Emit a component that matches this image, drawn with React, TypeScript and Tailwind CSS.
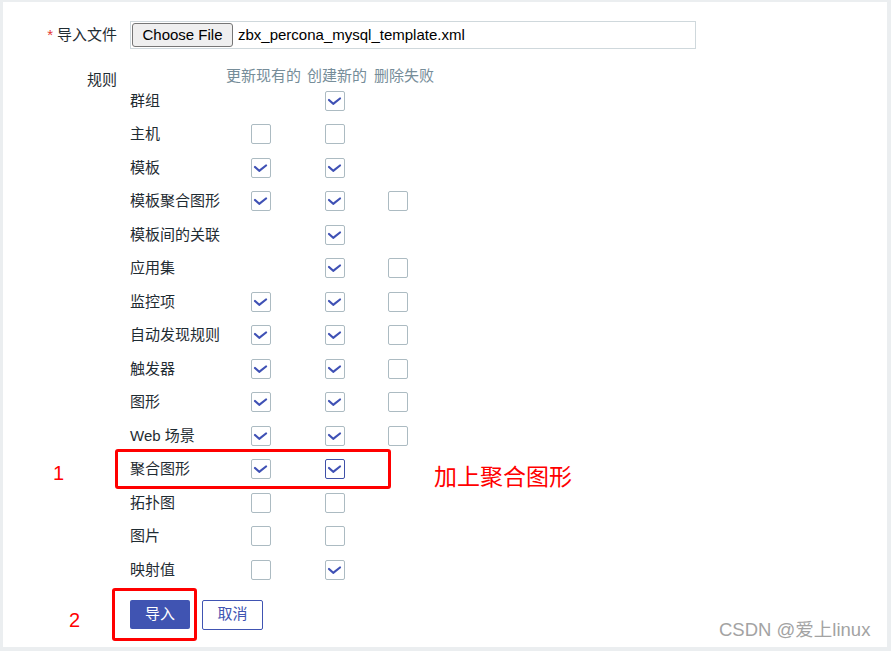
import React from 'react';

type Row = { name: string; update?: boolean | null; create?: boolean | null; del?: boolean | null; focus?: boolean };

// null = no checkbox in that column
const rows: Row[] = [
  { name: '群组', update: null, create: true, del: null },
  { name: '主机', update: false, create: false, del: null },
  { name: '模板', update: true, create: true, del: null },
  { name: '模板聚合图形', update: true, create: true, del: false },
  { name: '模板间的关联', update: null, create: true, del: null },
  { name: '应用集', update: null, create: true, del: false },
  { name: '监控项', update: true, create: true, del: false },
  { name: '自动发现规则', update: true, create: true, del: false },
  { name: '触发器', update: true, create: true, del: false },
  { name: '图形', update: true, create: true, del: false },
  { name: 'Web 场景', update: true, create: true, del: false },
  { name: '聚合图形', update: true, create: true, del: null, focus: true },
  { name: '拓扑图', update: false, create: false, del: null },
  { name: '图片', update: false, create: false, del: null },
  { name: '映射值', update: false, create: true, del: null },
];

function Checkbox({ checked, focus }: { checked: boolean; focus?: boolean }) {
  return (
    <div
      className={`w-5 h-5 rounded-[2px] border bg-white ${
        focus ? 'border-[#3f51a8]' : 'border-[#acbbc2]'
      }`}
    >
      {checked && (
        <svg width="18" height="18" viewBox="0 0 18 18" fill="none">
          <path d="M3 8 L7.2 11.8 L14 6.5" stroke="#3f51b5" strokeWidth="2.2" strokeLinecap="round" strokeLinejoin="round" />
        </svg>
      )}
    </div>
  );
}

export default function App() {
  const font = { fontFamily: '"Liberation Sans", Arial, "Noto Sans CJK SC", sans-serif' };

  return (
    <div className="relative w-[891px] h-[651px] bg-[#ebeef0] pt-[2px] pl-[3px] pr-[4px] pb-[4px] overflow-hidden" style={font}>
      <div className="w-full h-full bg-white pt-[19px] text-[15px] text-[#1f2c33]">
        {/* Import file */}
        <div className="flex items-center h-[28px]">
          <div className="w-[114px] text-right">
            <span className="text-[#e33734] mr-[4px]">*</span>导入文件
          </div>
          <div className="ml-[13px] w-[566px] h-[28px] border border-[#cfd8dc] flex items-center pl-[1px]">
            <button className="h-[24px] w-[101px] bg-[#efefef] border border-[#767676] rounded-[3px] text-[15px] text-black">
              Choose File
            </button>
            <span className="ml-[5px] text-black">zbx_percona_mysql_template.xml</span>
          </div>
        </div>

        {/* Rules */}
        <div className="flex mt-[16px]">
          <div className="w-[114px] text-right pt-[4px]">规则</div>
          <div className="ml-[13px]">
            <div className="grid grid-cols-[96px_79px_67px_68px] h-[19px] items-center text-[#768d99]">
              <div />
              <div>更新现有的</div>
              <div className="pl-[2px]">创建新的</div>
              <div className="pl-[2px]">删除失败</div>
            </div>
            {rows.map((r) => (
              <div key={r.name} className="grid grid-cols-[96px_79px_67px_68px] h-[33.5px] items-center">
                <div>{r.name}</div>
                <div className="pl-[25px]">{r.update != null && <Checkbox checked={r.update} />}</div>
                <div className="pl-[20px]">{r.create != null && <Checkbox checked={r.create} focus={r.focus} />}</div>
                <div className="pl-[16px]">{r.del != null && <Checkbox checked={r.del} />}</div>
              </div>
            ))}
          </div>
        </div>

        {/* Buttons */}
        <div className="flex gap-[12px] ml-[127px] mt-[13px]">
          <button className="w-[60px] h-[29px] bg-[#4054b2] text-white rounded-[2px] text-[15px]">导入</button>
          <button className="w-[61px] h-[30px] border border-[#4054b2] text-[#4054b2] bg-white rounded-[2px] text-[15px]">
            取消
          </button>
        </div>
      </div>

      {/* Annotations */}
      <div className="absolute left-[115px] top-[449px] w-[276px] h-[40px] border-[3px] border-[#ff0000] rounded-[3px]" />
      <div className="absolute left-[112px] top-[588px] w-[85px] h-[53px] border-[3px] border-[#ff0000] rounded-[3px]" />
      <div className="absolute left-[53px] top-[463px] text-[20px] text-[#ff0000] leading-none">1</div>
      <div className="absolute left-[69px] top-[610px] text-[20px] text-[#ff0000] leading-none">2</div>
      <div className="absolute left-[434px] top-[466px] text-[23px] text-[#ff0000] leading-none">加上聚合图形</div>
      <div className="absolute left-[719px] top-[621px] text-[18.5px] text-[#a3a3a3] leading-none">CSDN @爱上linux</div>
    </div>
  );
}
